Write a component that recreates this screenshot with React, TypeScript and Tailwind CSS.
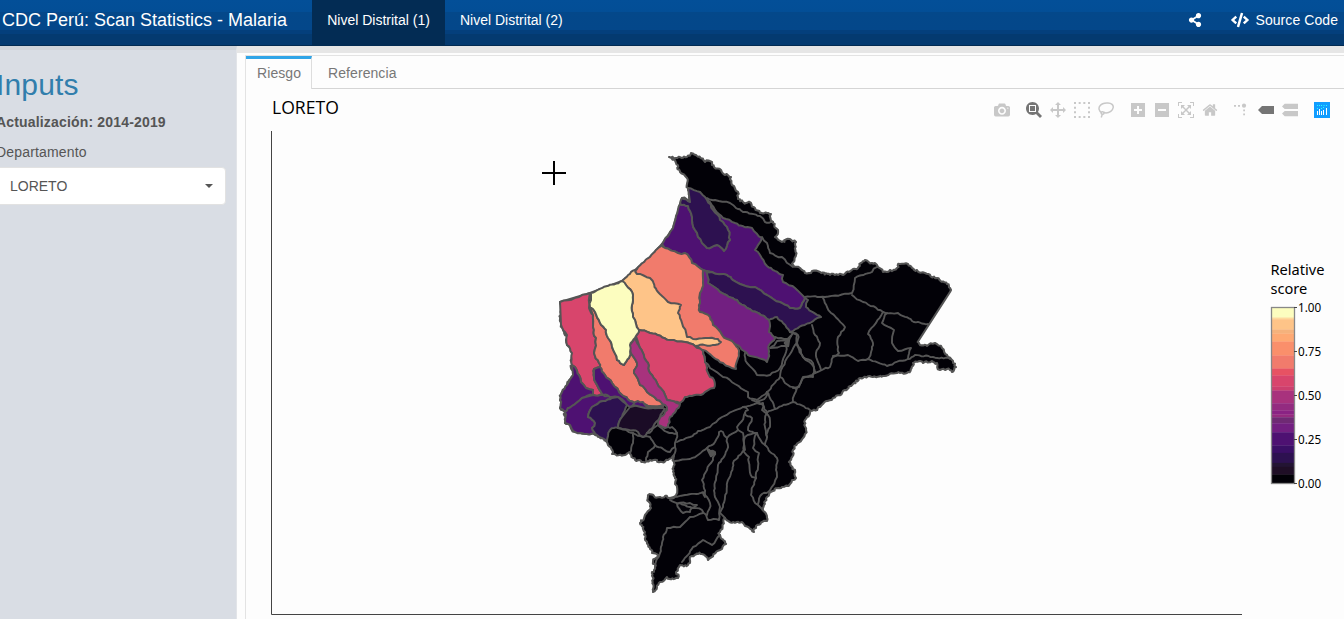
import React from "react";
import { FaShareAlt, FaCode } from "react-icons/fa";

type Pt = [number, number];

const parse = (s: string): Pt[] =>
  s.trim().split(/\s+/).map((p) => p.split(",").map(Number) as Pt);

// Repeatable offset for the middle of a segment; the same for both directions.
function wobble(a: Pt, b: Pt): number {
  const v = Math.sin((a[0] + b[0]) * 12.9898 + (a[1] + b[1]) * 78.233) * 43758.5453;
  return (v - Math.floor(v)) * 2 - 1;
}

function split(a: Pt, b: Pt, amp: number, min: number): Pt[] {
  const dx = b[0] - a[0];
  const dy = b[1] - a[1];
  const len = Math.hypot(dx, dy);
  if (len < min || len > 40) return [b];
  const swap = a[0] > b[0] || (a[0] === b[0] && a[1] > b[1]) ? -1 : 1;
  const k = (wobble(a, b) * amp * swap) / len;
  const m: Pt = [(a[0] + b[0]) / 2 - dy * k, (a[1] + b[1]) / 2 + dx * k];
  return [...split(a, m, amp * 0.8, min), ...split(m, b, amp * 0.8, min)];
}

function toPath(s: string, amp: number, closed: boolean, min = 4): string {
  const pts = parse(s);
  const out: Pt[] = [pts[0]];
  for (let i = 1; i < pts.length; i++) out.push(...split(pts[i - 1], pts[i], amp, min));
  return "M" + out.map((p) => `${p[0].toFixed(1)} ${p[1].toFixed(1)}`).join("L") + (closed ? "Z" : "");
}

const COAST =
  "682,198 690,202 688,190 687,178 680,172 676,163 669,157 676,158 687,157 691,153 697,156 705,162 712,162 714,167 721,170 725,175 731,177 732,185 738,192 738,199 743,202 751,203 755,208 760,213 771,214 773,222 778,230 775,237 782,242 790,239 796,242 796,255 793,265 800,268 805,273 812,271 820,272 830,275 843,275 853,269 858,268 861,263 865,260 872,263 877,265 883,272 890,270 897,268 900,264 908,264 917,270 925,273 937,278 947,284 950,288 950,292";
const COAST_EAST =
  "917.7,342 927,346 935,343 942,348 947,355 953,361 956,367 952,372 947,369 940,370 937,363 932,361 923,363 913,363 908,372 897,373 883,376 873,377 860,378 853,384 845,390 833,398 820,407 810,412 807,417 806,430 803,438 793,450 789,462 795,470 796,478 790,484 782,487 773,491 767,497 763,508 767,521 756,526 754,532 743,523 733,522 725,518 720,532 720,535 726,544 720,550 708,560 702,554 692,556 690,563 680,565 676,572 678,578 667,577 660,582 653,592 652,572 655,567 653,562 658,555 652,553 647,542 645,532 640,523 645,515 651,508 648,495 660,497 670,498 676,495 675,477 674,455 668,460 662,462 657,460 650,460 643,462 633,458 630,452 625,455 612,454 607,442 597,435 587,434 575,432 570,425 565,423 565,413 560,408 560,400 562,392 567,385 573,375 572,365 572,353 567,345 567,335 561,325 560,302";
const FRONTIER = "560,302 590,293 622,281 635,270 650,257 662,244 673,228 682,198";

const DISTRICTS: { fill: string; pts: string }[] = [
  { fill: "#4e1172", pts: "662,244 673,228 680,204 688,206 692,217 695,230 702,243 707,248 717,245 724,251 730,240 728,230 720,220 713,210 707,200 715,210 723,218 735,223 752,228 762,238 755,250 760,255 767,266 783,275 783,282 795,288 805,298 800,308 790,308 780,302 767,295 755,287 740,284 727,275 712,272 703,270 692,263 685,253 678,253 665,248" },
  { fill: "#2d1150", pts: "688,188 700,192 705,197 707,200 713,210 720,220 728,230 730,240 724,251 717,245 707,248 702,243 695,230 692,217 688,206 680,204 682,198 690,202" },
  { fill: "#2d1150", pts: "706,271 712,272 727,275 740,284 755,287 767,295 780,302 790,308 800,308 805,298 808,300 806,307 821,317 810,323 790,332 783,323 777,317 769,320 747,308 737,300 720,292 708,283" },
  { fill: "#721f81", pts: "703,270 706,271 708,283 720,292 737,300 747,308 769,320 769,332 775,338 769,345 767,362 748,355 740,347 732,341 722,335 713,325 710,317 700,312 700,303 700,293 703,283" },
  { fill: "#f17b6c", pts: "635,271 650,257 662,244 665,248 678,253 685,253 692,263 703,270 703,283 700,293 700,303 700,312 710,317 713,325 722,335 732,341 738,348 736,369 723,363 713,357 703,350 695,346 668,330 650,300" },
  { fill: "#fec488", pts: "622,281 635,270 637,274 650,278 658,292 668,302 681,305 678,313 682,323 687,337 693,339 718,339 721,342 715,345 695,346 685,342 670,340 650,333 639,330 633,317 632,305 633,295 626,285" },
  { fill: "#d8456c", pts: "636,336 639,330 650,333 670,340 685,342 695,346 703,351 705,362 710,377 714,380 714,388 703,394 685,397 680,403 667,400 665,395 657,383 650,373 648,363 640,348" },
  { fill: "#d8456c", pts: "560,302 590,293 589,308 593,315 593,327 596,338 594,353 599,363 600,367 594,369 594,377 598,387 603,395 593,395 593,390 586,388 581,382 579,375 575,367 572,365 572,353 567,345 567,335 561,325" },
  { fill: "#f17b6c", pts: "590,307 595,312 600,323 606,330 608,338 612,347 617,360 624,365 629,358 630,350 637,363 634,373 640,385 647,392 657,400 665,405 657,408 645,404 635,404 630,401 622,395 612,383 605,375 600,367 599,363 594,353 596,338 593,327 593,315" },
  { fill: "#a8327d", pts: "635,338 640,348 648,363 650,373 657,383 665,395 667,400 680,404 670,417 668,427 665,428 658,425 660,417 667,410 665,405 657,400 647,392 640,385 634,373 637,363 630,350 630,345" },
  { fill: "#fcfdbf", pts: "591,293 622,281 626,285 633,295 632,305 633,317 639,330 635,338 630,345 629,358 624,365 617,360 612,347 608,338 606,330 600,323 595,312 590,307 591,300" },
  { fill: "#4e1172", pts: "572,365 575,367 579,375 581,382 586,388 593,390 593,395 582,398 572,406 565,412 560,408 560,400 562,392 567,385 573,375" },
  { fill: "#4e1172", pts: "593,395 603,395 612,398 603,401 592,407 588,417 595,423 592,428 597,435 587,434 575,432 570,425 565,423 565,412 572,406 582,398" },
  { fill: "#4e1172", pts: "594,369 600,367 605,375 612,383 622,395 630,401 635,404 630,407 618,397 612,397 603,395 598,387 594,377" },
  { fill: "#2d1150", pts: "618,397 627,405 622,417 618,428 610,430 607,442 597,435 592,428 595,423 588,417 592,407 603,401 612,398" },
  { fill: "#1b0c26", pts: "630,407 643,405 665,409 660,417 653,427 647,433 643,437 638,432 618,428 622,417" },
  { fill: "#4e1172", pts: "633,405 638,401 643,402 646,406 658,408 645,408" },
];

const BORDERS = [
  "707,198 715,200 730,203 743,212 760,216 765,222 773,222",
  "762,237 767,243 770,253 782,257 793,267",
  "805,297 825,297 852,293 855,278 872,272 877,267",
  "852,295 863,302 883,312 898,313 912,321 928,324",
  "823,298 827,307 845,327 838,337 839,353 833,357 830,367 822,370 815,373 813,363 803,357 798,347 797,335 790,332",
  "883,312 868,334 873,343 868,359",
  "887,313 882,323 894,330 892,343 898,351 911,348 908,359 887,366 868,359 858,361 848,355 833,356",
  "908,359 915,355 933,357 950,359",
  "812,325 815,335 820,343 816,353 821,370",
  "815,373 803,378 799,387 793,388",
  "793,333 798,335 797,343 803,357 814,367 813,377 803,377 797,388 793,402 810,410",
  "787,341 777,341 770,348 785,346 793,333 787,343 785,355 780,368 770,375 757,375 747,363 745,353",
  "775,337 787,339 791,336",
  "797,343 795,345 787,358 781,370 780,377 785,383 796,389",
  "780,377 767,392 757,400 748,397 748,392 735,384 723,377 710,368 705,362 703,351",
  "767,392 771,400 775,409 793,402",
  "767,392 766,397 757,403 763,403 762,410 768,415 770,427 767,437",
  "757,403 743,407 722,417 710,427 698,431 690,437 677,442",
  "743,407 748,410 745,413 742,421 737,427 738,430 727,438 723,432 719,432 715,442 707,448 690,459 675,461",
  "727,438 727,450 718,465 716,480 715,497 720,507 719,520 708,520 702,510 690,507 670,500",
  "707,448 715,452 713,460 707,470 702,480 707,497 710,503 707,515",
  "709,450 713,454 712,451",
  "670,498 685,495 703,492 705,497",
  "677,504 683,513 690,512 692,508 697,505 690,503 677,504",
  "738,430 743,433 745,450 733,463 728,480 725,497 723,507 720,513 725,518",
  "745,413 752,418 748,430 757,433 753,448 759,453 758,467 756,478 752,477 749,457 744,452 745,437 757,433",
  "756,478 751,495 758,505 763,510",
  "757,433 765,445 777,458 777,477 770,490 762,494 758,504",
  "752,400 763,405 767,413 765,420 767,437 765,445",
  "767,413 775,409",
  "703,513 690,517 680,527 667,528 663,537 660,553 655,567",
  "682,562 693,547 703,540 712,545 720,535",
  "618,428 633,433 633,443 630,453",
  "633,433 643,437 650,437 655,445 648,452 646,460",
  "655,445 670,452 675,447",
  "647,433 655,427 658,425 667,432 677,433 675,447 674,455",
  "668,427 672,427 677,433",
];

// [height, colour] of the bands, top to bottom
const BANDS: [number, string][] = [
  [10, "#fcfdbf"], [1.7, "#feda9c"], [10.3, "#fec488"], [4, "#f5b27c"], [8, "#fea973"],
  [14, "#fa8f6b"], [13, "#f17b6c"], [7, "#e75263"], [11, "#d8456c"], [4, "#cc3f6e"],
  [12.7, "#a8327d"], [7.3, "#932b80"], [4, "#8a2384"], [2.7, "#952a7f"], [6, "#6f2a74"],
  [9, "#721f81"], [13.3, "#4e1172"], [7.4, "#3b0f66"], [10, "#2d1150"], [4, "#231433"],
  [7.7, "#1f0e26"], [9, "#020107"],
];

function ScoreMap() {
  let y = 307.5;
  const outer = toPath(COAST, 1.6, false, 2.5);
  const east = toPath(COAST_EAST, 1.6, false, 2.5);
  return (
    <svg viewBox="246 89 1098 530" className="block h-[530px] w-[1098px]" style={{ fontFamily: '"Noto Sans", sans-serif' }}>
      <text x="272" y="114" fontSize="17.6" className="font-['Open_Sans']">LORETO</text>
      <path d="M271.5 131V614.5H1242" fill="none" stroke="#444" />
      <g stroke="#555" strokeWidth="2.1" strokeLinejoin="round" strokeLinecap="round">
        <path d={`${outer}L${east.slice(1)}L${parse(FRONTIER).map((p) => p.join(" ")).join("L")}Z`} fill="#020107" />
        {DISTRICTS.map((d, i) => <path key={i} d={toPath(d.pts, 1.1, true)} fill={d.fill} strokeWidth="2" />)}
        {BORDERS.map((b, i) => <path key={i} d={toPath(b, 1.1, false)} fill="none" strokeWidth="1.9" />)}
        <path d="M785 343L789 339L788 346Z M708 450L714 453L711 456Z M647 406.500H663" fill="#555" strokeWidth="2.500" />
      </g>
      <path d="M554 161V185M542 173H566" stroke="#000" strokeWidth="2" />
      <g className="font-['Noto_Sans']">
        <text x="1270.5" y="275" fontSize="14.6">Relative</text>
        <text x="1270.5" y="294" fontSize="14.6">score</text>
        {BANDS.map(([h, c], i) => {
          const r = <rect key={i} x="1271.5" y={y} width="23" height={h + 0.3} fill={c} />;
          y += h;
          return r;
        })}
        <rect x="1271.5" y="307.5" width="23" height="176" fill="none" stroke="#888" strokeWidth="1.3" />
        {["1.00", "0.75", "0.50", "0.25", "0.00"].map((t, i) => (
          <g key={t}>
            <path d={`M1294 ${307.5 + i * 44}h3`} stroke="#444" />
            <text x="1298" y={312 + i * 44} fontSize="11.7">{t}</text>
          </g>
        ))}
      </g>
    </svg>
  );
}

function Glyph({ d, w = 1000, on = false }: { d: string; w?: number; on?: boolean }) {
  return (
    <svg viewBox={`0 0 ${w} 1000`} className={on ? "size-4 fill-[#757575]" : "size-4 fill-[#c8c8c8]"}>
      <path d={d} transform="matrix(1 0 0 -1 0 850)" />
    </svg>
  );
}

function ModeBar() {
  return (
    <div className="absolute top-[13px] right-[14px] flex gap-4">
      <Glyph d="m500 450c-83 0-150-67-150-150 0-83 67-150 150-150 83 0 150 67 150 150 0 83-67 150-150 150z m400 150h-120c-16 0-34 13-39 29l-31 93c-6 15-23 28-40 28h-340c-16 0-34-13-39-28l-31-94c-6-15-23-28-40-28h-120c-55 0-100-45-100-100v-450c0-55 45-100 100-100h800c55 0 100 45 100 100v450c0 55-45 100-100 100z m-400-550c-138 0-250 112-250 250 0 138 112 250 250 250 138 0 250-112 250-250 0-138-112-250-250-250z m365 380c-19 0-35 16-35 35 0 19 16 35 35 35 19 0 35-16 35-35 0-19-16-35-35-35z" />
      <div className="flex gap-2">
        <Glyph on d="m1000-25l-250 251c40 63 63 138 63 218 0 224-182 406-407 406-224 0-406-182-406-406s183-406 407-406c80 0 155 22 218 62l250-250 125 125z m-812 250l0 438 437 0 0-438-437 0z m62 375l313 0 0-312-313 0 0 312z" />
        <Glyph d="m1000 350l-187 188 0-125-250 0 0 250 125 0-188 187-187-187 125 0 0-250-250 0 0 125-188-188 186-187 0 125 252 0 0-250-125 0 187-188 188 188-125 0 0 250 250 0 0-126 187 188z" />
        <svg viewBox="0 0 16 16" className="size-4 fill-none stroke-[#c8c8c8]">
          <path d="M0 1H16M0 15H16" strokeWidth="2" strokeDasharray="2 2.67" />
          <path d="M1 0V16M15 0V16" strokeWidth="2" strokeDasharray="2 2.67" />
        </svg>
        <svg viewBox="0 0 16 16" className="size-4 fill-none stroke-[#c8c8c8]">
          <path d="M3.5 10.5C.8 9 .3 6 2 3.800C3.600 1.500 7 .8 10 1C13.500 1.200 15.600 3 15.200 5.500C14.800 8.500 11.500 11 8 11C6 11 5.600 9.600 4.300 9.700C2.800 9.800 2.600 11.600 4.200 12.200C5.800 12.600 6.300 11.500 5.600 10.500M4.200 12.300C4 13.500 3.500 14.500 3.300 15.500" strokeWidth="1.500" />
        </svg>
      </div>
      <div className="flex gap-2">
        <Glyph w={875} d="m1 787l0-875 875 0 0 875-875 0z m687-500l-187 0 0-187-125 0 0 187-188 0 0 125 188 0 0 187 125 0 0-187 187 0 0-125z" />
        <Glyph w={875} d="m0 788l0-876 876 0 0 876-876 0z m688-500l-500 0 0 125 500 0 0-125z" />
        <Glyph d="m250 850l-187 0-63 0 0-62 0-188 63 0 0 188 187 0 0 62z m688 0l-188 0 0-62 188 0 0-188 62 0 0 188 0 62-62 0z m-875-938l0 188-63 0 0-188 0-62 63 0 187 0 0 62-187 0z m875 188l0-188-188 0 0-62 188 0 62 0 0 62 0 188-62 0z m-125 188l-1 0-93-94-156 156 156 156 92-93 2 0 0 250-250 0 0-2 93-92-156-156-156 156 94 92 0 2-250 0 0-250 0 0 93 93 157-156-157-156-93 94 0 0 0-250 250 0 0 0-94 93 156 157 156-157-93-93 0 0 250 0 0 250z" />
        <Glyph w={928.6} d="m786 296v-267q0-15-11-26t-25-10h-214v214h-143v-214h-214q-15 0-25 10t-11 26v267q0 1 0 2t0 2l321 264 321-264q1-1 1-4z m124 39l-34-41q-5-5-12-6h-2q-7 0-12 3l-386 322-386-322q-7-4-13-4-7 2-12 7l-35 41q-4 5-3 13t6 12l401 334q18 15 42 15t43-15l136-114v109q0 8 5 13t13 5h107q8 0 13-5t5-13v-227l122-102q5-5 6-12t-4-13z" />
      </div>
      <div className="flex gap-2">
        <svg viewBox="0 0 16 16" className="size-4 fill-[#c8c8c8]">
          <circle cx="10" cy="3.700" r="2.100" />
          <path d="M0 3h2v1.800H0zM4 3h2v1.800H4zM9.200 7.500h1.800V9.200H9.200zM9.200 11.500h1.800V13.300H9.200z" />
        </svg>
        <Glyph on w={1500} d="m375 725l0 0-375-375 375-374 0-1 1125 0 0 750-1125 0z" />
        <Glyph w={1125} d="m187 786l0 2-187-188 188-187 0 0 937 0 0 373-938 0z m0-499l0 1-187-188 188-188 0 0 937 0 0 376-938-1z" />
      </div>
      <svg viewBox="0 0 16 16" className="size-4">
        <path d="M0 0H16V16H0Z" fill="#119dff" />
        <path d="M3 9h1v4H3zM5 7h1v6H5zM7 9h1v4H7zM9 8h1v5H9zM12 6h1v7H12z" fill="#fff" />
        <path d="M3 6h1v1H3zM3 3h1v1H3zM5 3h1v1H5zM7 6h1v1H7zM7 3h1v1H7zM9.500 3h1v1H9.500zM9 5h1v1H9zM12 3h1v1H12z" fill="#25fefd" />
      </svg>
    </div>
  );
}

export default function App() {
  return (
    <div className="flex h-[619px] w-[1344px] flex-col overflow-hidden bg-[#fdfdfd] font-['Liberation_Sans',Arial,sans-serif] text-sm text-[#555]">
      <header className="flex h-[46px] shrink-0 border-b border-[#022b52] bg-[linear-gradient(#034f98_0px,#034e96_12px,#04488a_12px,#04478a_30px,#043f7c_30px,#043f7c_34px,#043a70_34px)] text-white">
        <div className="w-[312px] pt-2 pl-0.5 text-lg leading-[25px] whitespace-nowrap">CDC Perú: Scan Statistics - Malaria</div>
        <div className="w-[133px] bg-[#032c54] pt-2.5 text-center leading-5">Nivel Distrital (1)</div>
        <div className="flex-1 pt-2.5 pl-[15px] leading-5">Nivel Distrital (2)</div>
        <FaShareAlt className="mt-[13px] mr-[29px] size-[14px]" />
        <FaCode className="mt-3 mr-[7px] h-4 w-[18px]" />
        <div className="pt-2.5 pr-1.5 leading-5 tracking-[0.07px]">Source Code</div>
      </header>
      <div className="flex flex-1">
        <aside className="w-[237px] border-t-4 border-r border-t-[#d0d4da] border-r-[#e2e4e8] bg-[#d9dde4]">
          <div className="-ml-1 pt-[18px]">
            <h2 className="text-[30px] leading-[33px] tracking-[0.17px] text-[#317eac]">Inputs</h2>
            <p className="mt-[11px] leading-5 font-bold tracking-[0.17px]">Actualización: 2014-2019</p>
            <p className="mt-2.5 leading-5 tracking-[0.17px]">Departamento</p>
            <div className="mt-[5px] flex h-[38px] w-[230px] items-center justify-between rounded border border-[#e2e2e2] bg-white pr-3 pl-[13px]">
              <span>LORETO</span>
              <svg viewBox="0 0 8 4" className="h-1 w-2 fill-[#555]"><path d="M0 0H8L4 4Z" /></svg>
            </div>
          </div>
        </aside>
        <main className="flex-1 border-t-[7px] border-[#e6e6e6] pt-0.5 pl-2">
          <div className="border-t border-l border-[#e3e3e3]">
            <div className="flex h-[33px] text-[#777]">
              <div className="w-[66px] border-t-3 border-r border-t-[#2fa4e7] border-r-[#ddd] pt-1 pl-[11px] leading-5 tracking-[0.08px]">Riesgo</div>
              <div className="flex-1 border-b border-[#d5d5d5] pt-[7px] pl-4 leading-5 tracking-[0.08px]">Referencia</div>
            </div>
            <div className="relative">
              <ScoreMap />
              <ModeBar />
            </div>
          </div>
        </main>
      </div>
    </div>
  );
}
